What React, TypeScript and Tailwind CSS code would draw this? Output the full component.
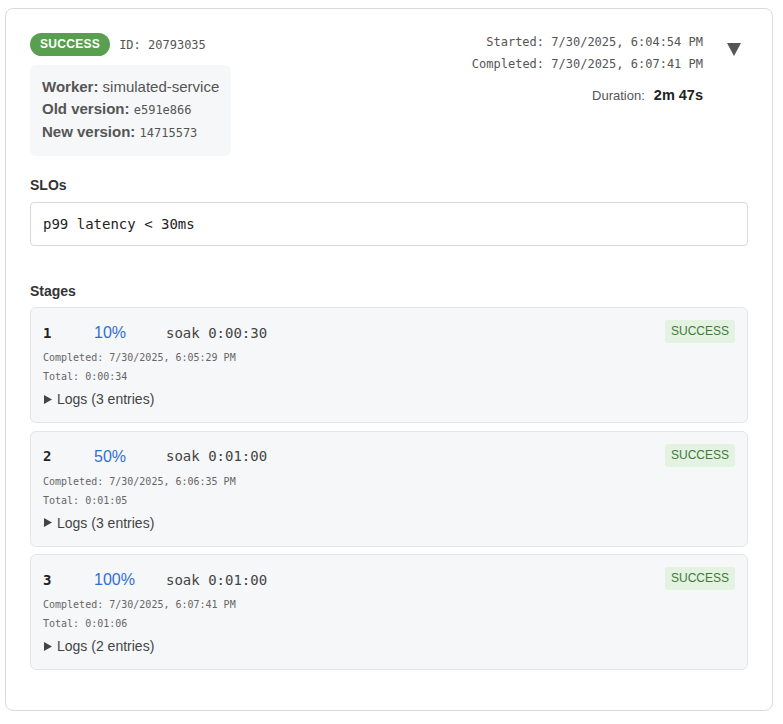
const sans = "font-['Liberation_Sans',Arial,sans-serif]";
const mono = "font-['DejaVu_Sans_Mono',monospace]";

interface Stage {
  index: number;
  percent: string;
  soak: string;
  completed: string;
  total: string;
  logs: number;
}

const stages: Stage[] = [
  { index: 1, percent: "10%", soak: "0:00:30", completed: "7/30/2025, 6:05:29 PM", total: "0:00:34", logs: 3 },
  { index: 2, percent: "50%", soak: "0:01:00", completed: "7/30/2025, 6:06:35 PM", total: "0:01:05", logs: 3 },
  { index: 3, percent: "100%", soak: "0:01:00", completed: "7/30/2025, 6:07:41 PM", total: "0:01:06", logs: 2 },
];

function StageCard({ stage }: { stage: Stage }) {
  return (
    <div className="flex items-start justify-between rounded-md border border-[#e3e5e8] bg-[#f6f7f9] px-3 pt-3 pb-[13px]">
      <div className="flex flex-col">
        <div className="flex h-[26px] items-center">
          <span className={`${mono} w-[51px] text-[14px] font-semibold text-[#222]`}>{stage.index}</span>
          <span className={`${sans} w-[72px] text-[16px] text-[#2f6fd3]`}>{stage.percent}</span>
          <span className={`${mono} text-[14px] text-[#444]`}>soak {stage.soak}</span>
        </div>
        <div className={`${mono} mt-1 text-[10px] leading-[15px] text-[#666]`}>Completed: {stage.completed}</div>
        <div className={`${mono} mt-1 text-[10px] leading-[15px] text-[#666]`}>Total: {stage.total}</div>
        <div className={`${sans} mt-[5px] flex items-center gap-[5px] text-[14px] leading-5 text-[#444]`}>
          <svg width="8" height="9" viewBox="0 0 8 9" className="ml-px">
            <polygon points="0,0 8,4.5 0,9" fill="#444" />
          </svg>
          Logs ({stage.logs} entries)
        </div>
      </div>
      <span className={`${sans} rounded-[3px] bg-[#e4f2e2] px-1.5 py-1 text-[12px] leading-[15px] text-[#3e7a39]`}>
        SUCCESS
      </span>
    </div>
  );
}

export default function App() {
  return (
    <div className="min-h-[724px] bg-white pt-2 pl-[5px]">
      <div className={`${sans} w-[768px] rounded-lg border border-[#dadada] bg-white px-6 pt-6 pb-10`}>
        <div className="flex items-start justify-between">
          <div className="flex flex-col items-start">
            <div className="flex h-[23px] items-center gap-[9px]">
              <span className="rounded-full bg-[#5a9f4f] px-2.5 py-1 text-[12px] font-bold leading-[15px] tracking-[0.3px] text-white">
                SUCCESS
              </span>
              <span className={`${mono} text-[12px] text-[#555]`}>ID: 20793035</span>
            </div>
            <div className="mt-[9px] rounded-md bg-[#f6f7f8] px-3 pt-[11px] pb-3 text-[15px] leading-[22px] text-[#555]">
              <div>
                <span className="font-bold">Worker:</span> simulated-service
              </div>
              <div>
                <span className="font-bold">Old version:</span> <span className={`${mono} text-[12px]`}>e591e866</span>
              </div>
              <div>
                <span className="font-bold">New version:</span> <span className={`${mono} text-[12px]`}>14715573</span>
              </div>
            </div>
          </div>
          <div className="flex items-start gap-6">
            <div className="-mt-0.5 flex flex-col items-end">
              <div className={`${mono} text-[12px] leading-[22px] text-[#555]`}>Started: 7/30/2025, 6:04:54 PM</div>
              <div className={`${mono} text-[12px] leading-[22px] text-[#555]`}>Completed: 7/30/2025, 6:07:41 PM</div>
              <div className="mt-2.5 flex items-baseline gap-[9px] leading-5">
                <span className="text-[13px] text-[#555]">Duration:</span>
                <span className="text-[14.5px] font-bold text-[#222]">2m 47s</span>
              </div>
            </div>
            <div className="w-[21px] pt-2.5">
              <svg width="14" height="13" viewBox="0 0 14 13">
                <polygon points="0,0 14,0 7,13" fill="#555" />
              </svg>
            </div>
          </div>
        </div>

        <div className="mt-[19px] text-[14px] font-bold leading-5 text-[#333]">SLOs</div>
        <div className={`${mono} mt-[7px] rounded border border-[#dadada] px-3 py-[11px] text-[14px] leading-5 text-[#222]`}>
          p99 latency &lt; 30ms
        </div>

        <div className="mt-[35px] text-[14px] font-bold leading-5 text-[#333]">Stages</div>
        <div className="mt-[6px] flex flex-col gap-[7.5px]">
          {stages.map((s) => (
            <StageCard key={s.index} stage={s} />
          ))}
        </div>
      </div>
    </div>
  );
}
